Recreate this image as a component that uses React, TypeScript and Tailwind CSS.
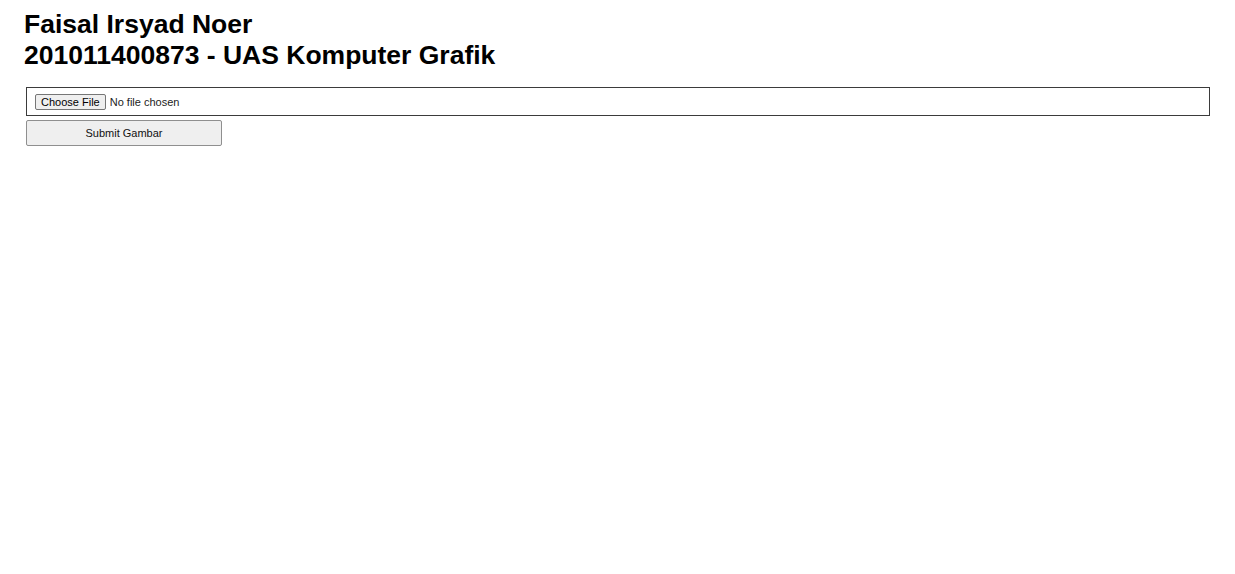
export default function App() {
  return (
    <div className="min-h-screen bg-white pl-[26px] pr-[25px] pt-[9px] font-['Liberation_Sans',Arial,sans-serif] text-black">
      <h1 className="-ml-[2px] text-[26.5px] font-bold leading-[31px]">
        Faisal Irsyad Noer
        <br />
        201011400873 - UAS Komputer Grafik
      </h1>

      <form className="mt-[16px] flex flex-col gap-[4px]" onSubmit={(e) => e.preventDefault()}>
        <input
          type="file"
          className="block h-[29px] w-full border border-[#3b3b3b] pl-[8px] pt-[6px] text-[11px] text-[#222] file:mr-[4px] file:h-[16px] file:rounded-[2px] file:border file:border-[#767676] file:bg-[#efefef] file:px-[5px] file:text-[11px] file:leading-[14px] file:text-black"
        />
        <button
          type="submit"
          className="h-[26px] w-[196px] rounded-[2px] border border-[#8f8f8f] bg-[#efefef] text-[11px] text-[#111]"
        >
          Submit Gambar
        </button>
      </form>
    </div>
  );
}
